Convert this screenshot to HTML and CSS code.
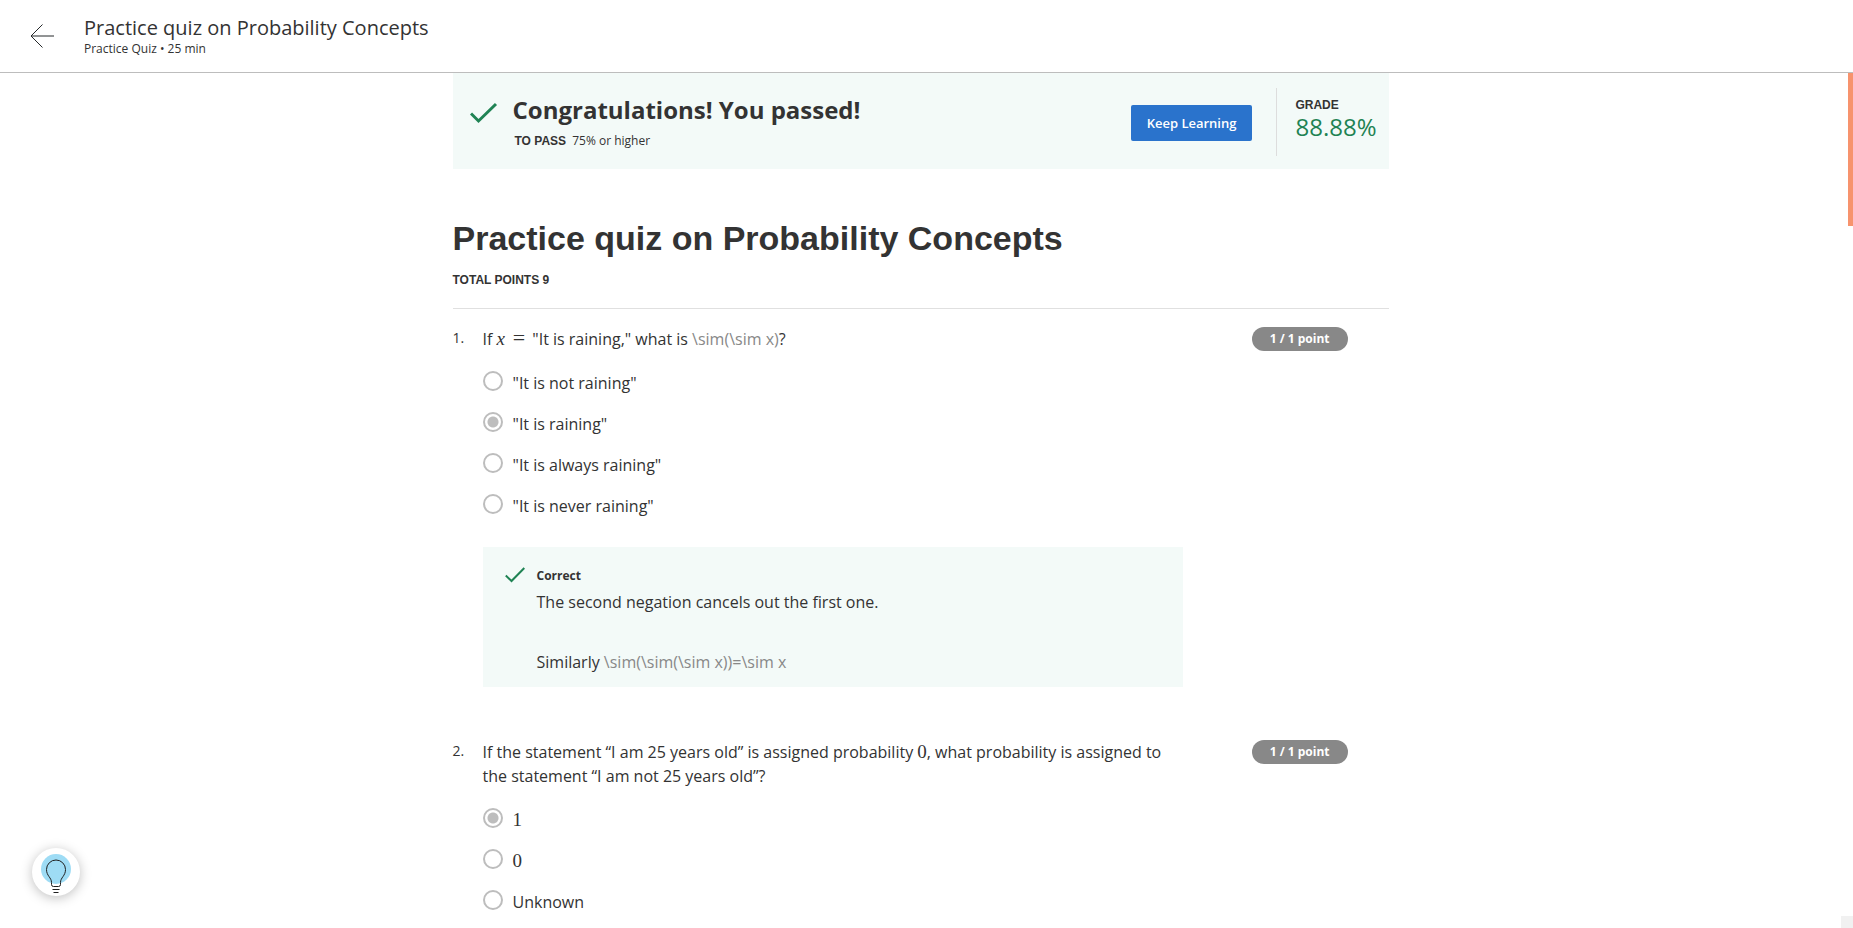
FILE: index.html
```html
<!DOCTYPE html>
<html lang="en">
<head>
<meta charset="utf-8">
<title>Practice quiz on Probability Concepts</title>
<link rel="stylesheet" href="styles.css">
</head>
<body>
<header class="topbar">
  <button class="back" type="button" aria-label="Back">
    <svg width="24" height="24" viewBox="0 0 24 24"><path d="M24 12H1M12.500 .5L1 12l11.500 11.500" fill="none" stroke="#25282a" stroke-width="1"/></svg>
  </button>
  <div>
    <div class="topbar-title">Practice quiz on Probability Concepts</div>
    <div class="topbar-sub">Practice Quiz • 25 min</div>
  </div>
</header>
<main class="scroller">
  <div class="content">
    <section class="banner">
      <svg class="banner-check" width="28" height="22" viewBox="0 0 28 22"><path d="M1 11.500L8.500 19 26 2" fill="none" stroke="#1f8354" stroke-width="3"/></svg>
      <div class="banner-text">
        <h2 class="banner-title">Congratulations! You passed!</h2>
        <p class="banner-sub"><span class="label">TO PASS</span> 75% or higher</p>
      </div>
      <button class="primary" type="button">Keep Learning</button>
      <div class="grade">
        <div class="label">GRADE</div>
        <div class="grade-value">88.88%</div>
      </div>
    </section>
    <div class="quiz-head">
      <h1 class="quiz-title">Practice quiz on Probability Concepts</h1>
      <div class="label">TOTAL POINTS 9</div>
    </div>
    <section class="question">
      <div class="number">1.</div>
      <div class="body">
        <p class="prompt">If <span class="math"><i>x</i> <span class="eq">=</span></span> "It is raining," what is <span class="tex">\sim(\sim x)</span>?</p>
        <div class="options">
          <label class="option"><input type="radio" name="q1"><span>"It is not raining"</span></label>
          <label class="option"><input type="radio" name="q1" checked><span>"It is raining"</span></label>
          <label class="option"><input type="radio" name="q1"><span>"It is always raining"</span></label>
          <label class="option"><input type="radio" name="q1"><span>"It is never raining"</span></label>
        </div>
        <div class="feedback">
          <svg class="feedback-check" width="20" height="16" viewBox="0 0 20 16"><path d="M.8 8.500L6.500 14 19.300 1" fill="none" stroke="#1f8354" stroke-width="2"/></svg>
          <div>
            <div class="verdict">Correct</div>
            <p class="explain">The second negation cancels out the first one.</p>
            <p class="explain">Similarly <span class="tex">\sim(\sim(\sim x))=\sim x</span></p>
          </div>
        </div>
      </div>
      <div class="points">1 / 1 point</div>
    </section>
    <section class="question">
      <div class="number">2.</div>
      <div class="body">
        <p class="prompt">If the statement “I am 25 years old” is assigned probability <span class="math">0</span>, what probability is assigned to the statement “I am not 25 years old”?</p>
        <div class="options">
          <label class="option"><input type="radio" name="q2" checked><span class="math">1</span></label>
          <label class="option"><input type="radio" name="q2"><span class="math">0</span></label>
          <label class="option"><input type="radio" name="q2"><span>Unknown</span></label>
        </div>
      </div>
      <div class="points">1 / 1 point</div>
    </section>
  </div>
</main>
<div class="thumb"></div>
<div class="corner"></div>
<button class="hint" type="button" aria-label="Hint">
  <svg width="48" height="48" viewBox="0 0 48 48"><circle cx="24" cy="21" r="15" fill="#9edcf5"/><path d="M19.500 36.500v-2c0-5-5-6.500-5-13a9.500 9.500 0 0 1 19 0c0 6.500-5 8-5 13v2q0 2-2 2h-5q-2 0-2-2z" fill="none" stroke="#1f1f1f"/><path d="M20.500 41.500h7M21.500 44.500h5" stroke="#1f1f1f"/></svg>
</button>
</body>
</html>
```
FILE: styles.css
```css
* { box-sizing: border-box; }
body {
  margin: 0;
  height: 100vh;
  overflow: hidden;
  display: flex;
  flex-direction: column;
  background: #fff;
  color: #333;
  font: 16px/24px "Open Sans", sans-serif;
}
p, h1, h2 { margin: 0; }
button { font-family: inherit; border: 0; padding: 0; cursor: pointer; }
svg { display: block; }
.topbar {
  flex: none;
  display: flex;
  align-items: center;
  gap: 30px;
  padding: 15px 30px;
  border-bottom: 1px solid #bdbdbd;
}
.back { background: none; }
.topbar-title { font-size: 20px; line-height: 26px; }
.topbar-sub { font-size: 12px; line-height: 16px; }
.scroller { flex: 1; min-height: 0; overflow: hidden; padding-right: 12px; }
.content { max-width: 936px; margin: 0 auto; }
.label {
  font: bold 12px/18px "Liberation Sans", Arial, sans-serif;
}
.banner {
  display: flex;
  align-items: center;
  height: 96px;
  padding: 2px 12px 0 17px;
  background: #f3faf8;
}
.banner-check { margin-right: 15px; margin-bottom: 18px; }
.banner-text { flex: 1; }
.banner-title { font-size: 24px; line-height: 32px; }
.banner-sub { font-size: 12px; line-height: 18px; padding: 6px 2px 0; }
.banner-sub .label { margin-right: 3px; }
.primary {
  padding: 0 16px;
  height: 36px;
  margin-top: 2px;
  border-radius: 2px;
  background: #2a73cc;
  color: #fff;
  font-size: 13px;
  font-weight: 600;
}
.grade {
  margin-left: 24px;
  padding: 8px 0 16px 18px;
  border-left: 1px solid #ddd;
}
.grade-value { font-size: 24px; line-height: 26px; color: #1f8354; }
.quiz-head {
  padding: 47px 0 19px;
  border-bottom: 1px solid #e0e0e0;
}
.quiz-title {
  margin-bottom: 11px;
  font: bold 34px/44px "Liberation Sans", Arial, sans-serif;
}
.question {
  display: flex;
  align-items: flex-start;
  padding: 18px 41px 35px 0;
}
.number { width: 30px; font-size: 14px; line-height: 22px; }
.body { width: 700px; }
.math { font-family: "Liberation Serif", serif; font-size: 19px; line-height: 20px; }
.eq { margin: 0 3px; font-size: 22px; line-height: 20px; }
.tex { color: #888; }
.options { padding-top: 20px; }
.option { display: flex; gap: 10px; height: 41px; }
.option input {
  appearance: none;
  flex: none;
  width: 20px;
  height: 20px;
  margin: 0;
  border: 2px solid #bdbdbd;
  border-radius: 50%;
  background: #fff;
}
.option input:checked { background: radial-gradient(circle, #bdbdbd 5px, #fff 6px); }
.option span { line-height: 24px; }
.feedback {
  display: flex;
  gap: 12px;
  margin-top: 12px;
  padding: 20px 22px 13px;
  background: #f3faf8;
}
.verdict { font-size: 12px; font-weight: bold; line-height: 17px; margin-bottom: 6px; }
.explain + .explain { margin-top: 36px; }
.points {
  margin-left: auto;
  padding: 0 18px;
  border-radius: 12px;
  background: #888;
  color: #fff;
  font-size: 12px;
  font-weight: bold;
}
.thumb {
  position: fixed;
  top: 73px;
  right: 0;
  width: 5px;
  height: 153px;
  background: #f7936d;
}
.corner {
  position: fixed;
  right: 0;
  bottom: 0;
  width: 12px;
  height: 12px;
  background: #f1f1f1;
}
.hint {
  position: fixed;
  left: 32px;
  bottom: 32px;
  width: 48px;
  height: 48px;
  border-radius: 50%;
  background: #fff;
  box-shadow: 0 2px 12px rgba(0, 0, 0, .25);
}
```
